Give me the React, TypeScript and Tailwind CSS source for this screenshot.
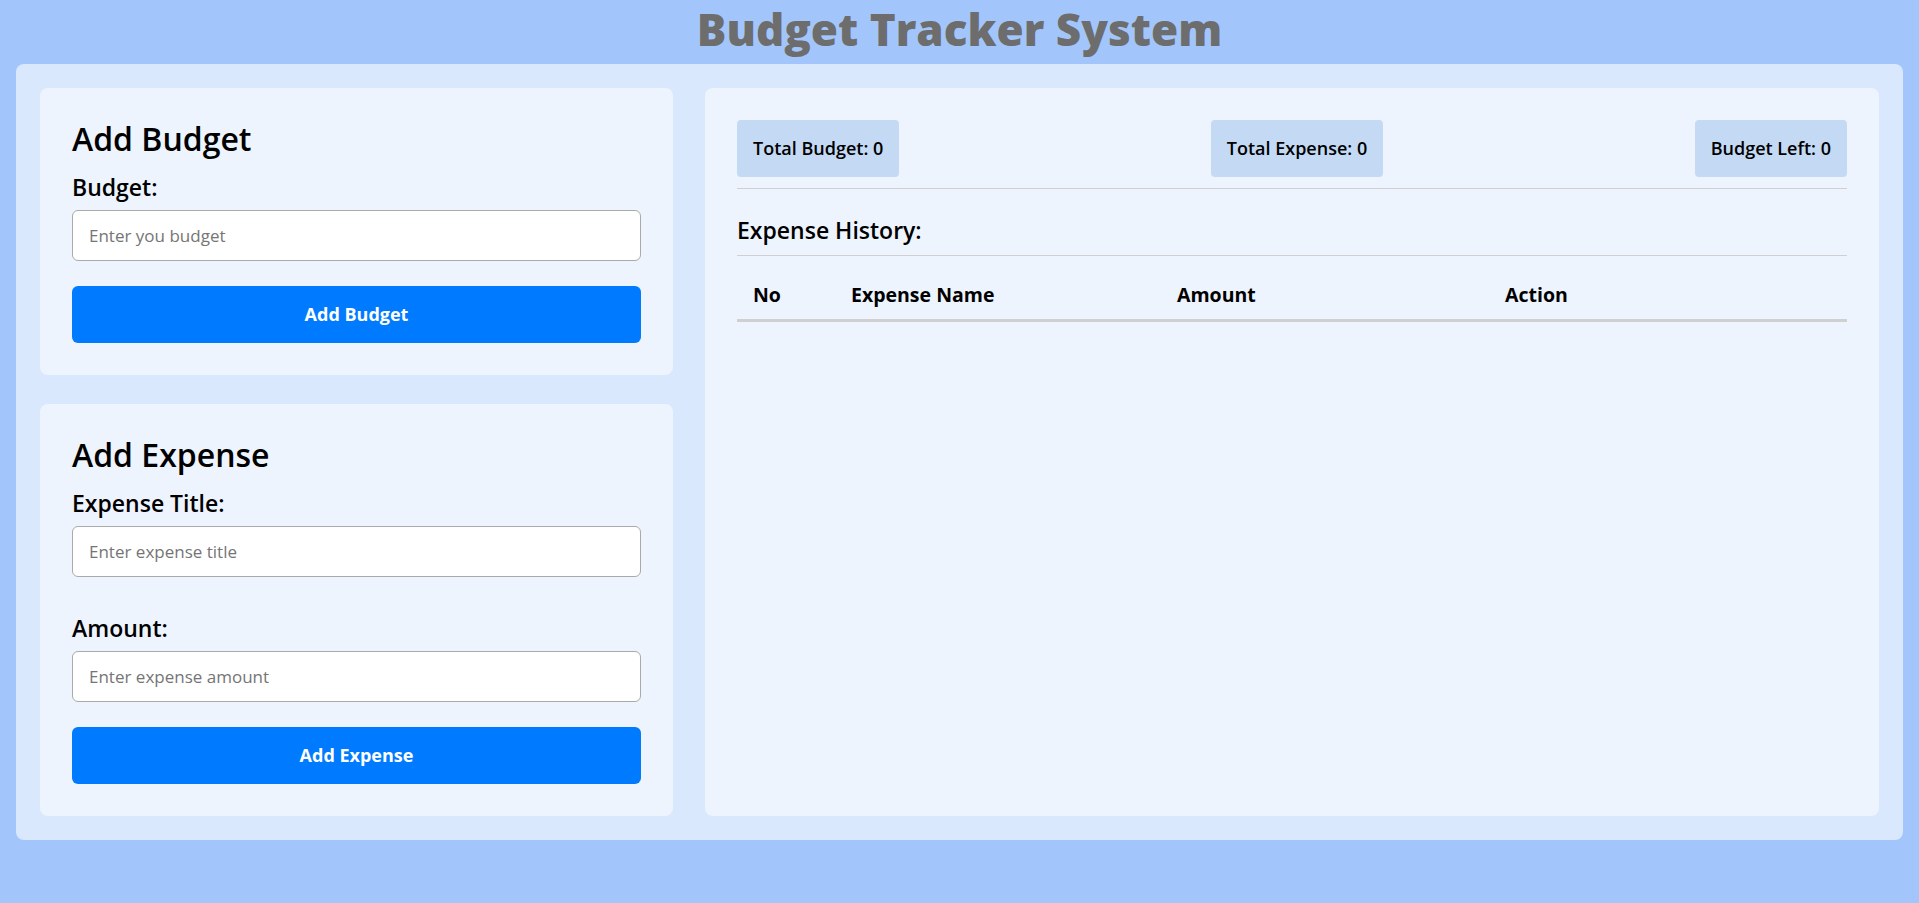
import React, { useState } from "react";

const font = { fontFamily: "'Open Sans', 'Noto Sans', 'Liberation Sans', sans-serif" };

const App = () => {
    const [budget, setBudget] = useState(0);
    const [expenses, setExpenses] = useState<{ title: string; amount: number }[]>([]);
    const [budgetInput, setBudgetInput] = useState("");
    const [title, setTitle] = useState("");
    const [amount, setAmount] = useState("");

    const totalExpense = expenses.reduce((s, e) => s + e.amount, 0);

    // add budget
    const addBudget = () => {
        const v = Number(budgetInput);
        if (!v) return;
        setBudget(budget + v);
        setBudgetInput("");
    };

    // add expense
    const addExpense = () => {
        const v = Number(amount);
        if (!title.trim() || !v) return;
        setExpenses([...expenses, { title, amount: v }]);
        setTitle("");
        setAmount("");
    };

    return (
        <div className="min-h-screen bg-[#a2c6fb] px-4 text-black" style={font}>
            {/* TITLE */}
            <h1 className="h-16 pb-[6px] flex items-center justify-center text-[44px] font-extrabold text-[#6d6d6d] leading-none">
                Budget Tracker System
            </h1>

            <div className="bg-[#dae8fd] rounded-lg p-6 flex gap-8">
                {/* LEFT */}
                <div className="w-[633px] shrink-0 flex flex-col gap-[29px]">
                    <div className="bg-[#edf4fe] rounded-lg px-8 pt-8 pb-8">
                        <h2 className="text-[32px] font-semibold leading-[38px]">Add Budget</h2>
                        <label className="block mt-4 text-[23px] font-semibold leading-[26px]">Budget:</label>
                        <input
                            type="number"
                            value={budgetInput}
                            onChange={(e) => setBudgetInput(e.target.value)}
                            placeholder="Enter you budget"
                            className="mt-2.5 w-full h-[51px] bg-white border border-[#aaaaaa] rounded-md px-4 text-[17px] outline-none placeholder:text-[#757575]"
                        />
                        <button
                            onClick={addBudget}
                            className="mt-[25px] w-full h-[57px] bg-[#007bff] text-white rounded-md text-[18px] font-bold"
                        >
                            Add Budget
                        </button>
                    </div>

                    <div className="bg-[#edf4fe] rounded-lg px-8 pt-8 pb-8">
                        <h2 className="text-[32px] font-semibold leading-[38px]">Add Expense</h2>
                        <label className="block mt-4 text-[23px] font-semibold leading-[26px]">Expense Title:</label>
                        <input
                            type="text"
                            value={title}
                            onChange={(e) => setTitle(e.target.value)}
                            placeholder="Enter expense title"
                            className="mt-2.5 w-full h-[51px] bg-white border border-[#aaaaaa] rounded-md px-4 text-[17px] outline-none placeholder:text-[#757575]"
                        />
                        <label className="block mt-[38px] text-[23px] font-semibold leading-[26px]">Amount:</label>
                        <input
                            type="number"
                            value={amount}
                            onChange={(e) => setAmount(e.target.value)}
                            placeholder="Enter expense amount"
                            className="mt-2.5 w-full h-[51px] bg-white border border-[#aaaaaa] rounded-md px-4 text-[17px] outline-none placeholder:text-[#757575]"
                        />
                        <button
                            onClick={addExpense}
                            className="mt-[25px] w-full h-[57px] bg-[#007bff] text-white rounded-md text-[18px] font-bold"
                        >
                            Add Expense
                        </button>
                    </div>
                </div>

                {/* RIGHT */}
                <div className="flex-1 bg-[#edf4fe] rounded-lg px-8 pt-8 pb-8">
                    <div className="flex justify-between">
                        <div className="h-[57px] px-4 flex items-center bg-[#c4daf4] rounded text-[18px] font-semibold">
                            Total Budget: {budget}
                        </div>
                        <div className="h-[57px] px-4 flex items-center bg-[#c4daf4] rounded text-[18px] font-semibold">
                            Total Expense: {totalExpense}
                        </div>
                        <div className="h-[57px] px-4 flex items-center bg-[#c4daf4] rounded text-[18px] font-semibold">
                            Budget Left: {budget - totalExpense}
                        </div>
                    </div>
                    <hr className="mt-[11px] border-0 border-t border-[#d0d0d0]" />
                    <h3 className="mt-[28px] text-[23px] font-semibold leading-[26px]">Expense History:</h3>
                    <hr className="mt-[12px] border-0 border-t border-[#d0d0d0]" />

                    <div className="grid grid-cols-[98px_326px_328px_1fr] pt-[28px] pb-[13px] leading-[22px] border-b-[3px] border-[#d0d0d0] text-[19.5px] font-bold">
                        <div className="px-4">No</div>
                        <div className="px-4">Expense Name</div>
                        <div className="px-4">Amount</div>
                        <div className="px-4">Action</div>
                    </div>
                    {expenses.map((e, i) => (
                        <div
                            key={i}
                            className="grid grid-cols-[98px_326px_328px_1fr] h-[50px] items-center border-b border-[#d0d0d0] text-[17px]"
                        >
                            <div className="px-4">{i + 1}</div>
                            <div className="px-4">{e.title}</div>
                            <div className="px-4">{e.amount}</div>
                            <div className="px-4">
                                <button
                                    onClick={() => setExpenses(expenses.filter((_, j) => j !== i))}
                                    className="px-3 py-1 bg-red-500 text-white rounded text-sm"
                                >
                                    Delete
                                </button>
                            </div>
                        </div>
                    ))}
                </div>
            </div>
        </div>
    );
};

export default App;
